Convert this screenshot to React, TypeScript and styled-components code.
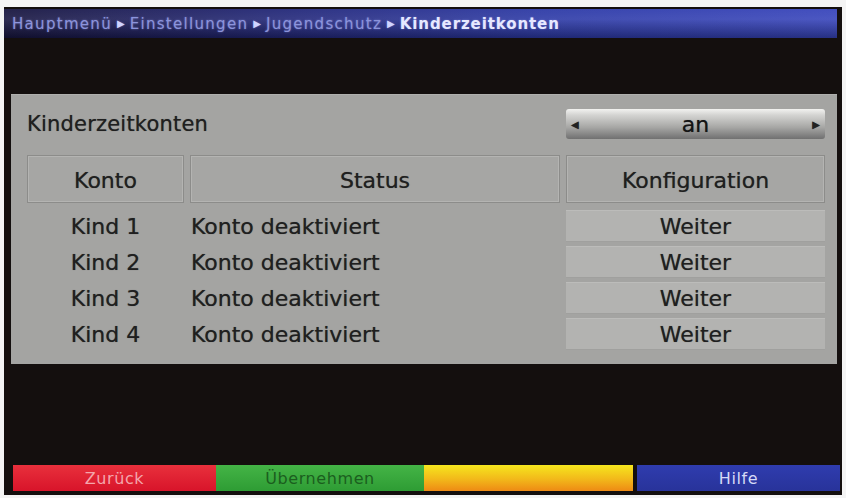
import React from "react";
import styled, { createGlobalStyle } from "styled-components";

const Global = createGlobalStyle`
  html, body { margin: 0; padding: 0; background: #f4f4f4; }
  body { font-family: "DejaVu Sans", "Liberation Sans", sans-serif; }
`;

const Page = styled.div`
  width: 846px;
  height: 498px;
  padding: 7px 4px 3px 4px;
  box-sizing: border-box;
`;

const Screen = styled.div`
  height: 488px;
  background: #140f0e;
  display: flex;
  flex-direction: column;
  padding: 2px 0 4px 0;
  box-sizing: border-box;
`;

const TitleBar = styled.div`
  height: 29px;
  margin-right: 5px;
  display: flex;
  align-items: center;
  padding-left: 8px;
  background:
    linear-gradient(to bottom, rgba(255,255,255,0.06), rgba(255,255,255,0.1) 35%, rgba(0,0,0,0.3)),
    linear-gradient(to right, #17153f 0%, #22277a 35%, #2c39a6 65%, #3744bb 100%);
  font-size: 15px;
  white-space: nowrap;
  text-shadow: 0 0 2px rgba(160,170,255,0.5);
`;

const Crumb = styled.span<{ $current?: boolean }>`
  color: ${(p) => (p.$current ? "#e6e8ff" : "#8c94dc")};
  font-weight: ${(p) => (p.$current ? "bold" : "normal")};
  letter-spacing: ${(p) => (p.$current ? "0.9px" : "1.3px")};
`;

const Sep = styled.span`
  color: #d0d4ff;
  font-size: 10px;
  margin: 0 5px;
`;

const Panel = styled.div`
  margin: 56px 5px 0 7px;
  height: 270px;
  box-sizing: border-box;
  background: #a4a4a2;
  border-top: 1px solid #b0b0ae;
  padding: 14px 12px 0 16px;
  display: flex;
  flex-direction: column;
  color: #1f1f1f;
  font-size: 22px;
  text-shadow: 0 0 0.7px rgba(0,0,0,0.55);
`;

const SettingRow = styled.div`
  display: flex;
  align-items: center;
  justify-content: space-between;
  height: 30px;
`;

const Label = styled.div`
  font-size: 21px;
  letter-spacing: 0.2px;
`;

const Selector = styled.div`
  width: 259px;
  height: 30px;
  box-sizing: border-box;
  border-radius: 3px;
  background: linear-gradient(to bottom, #f2f2f0 0%, #d4d4d2 20%, #a8a8a6 60%, #707070 100%);
  display: flex;
  align-items: center;
  justify-content: space-between;
  padding: 0 5px;
  font-size: 22px;
  color: #141414;
`;

const Arrow = styled.span`
  font-size: 10px;
  color: #222;
`;

const Grid = styled.div`
  display: grid;
  grid-template-columns: 157px 370px 259px;
  column-gap: 6px;
`;

const HeaderGrid = styled(Grid)`
  margin-top: 16px;
`;

const HeaderCell = styled.div`
  height: 48px;
  box-sizing: border-box;
  border: 1px solid #8c8c8a;
  box-shadow: inset 0 0 0 1px #b4b4b2;
  background: #a6a6a4;
  display: flex;
  align-items: center;
  justify-content: center;
  padding-top: 2px;
`;

const Rows = styled.div`
  margin-top: 7px;
  display: flex;
  flex-direction: column;
  gap: 4px;
`;

const RowGrid = styled(Grid)`
  height: 32px;
  align-items: center;
`;

const KontoCell = styled.div`
  text-align: center;
`;

const StatusCell = styled.div`
  padding-left: 1px;
`;

const Button = styled.div`
  height: 32px;
  background: #b3b3b1;
  box-shadow: inset 0 -1px 0 #a0a09e, inset 0 1px 0 #bcbcba;
  display: flex;
  align-items: center;
  justify-content: center;
`;

const Footer = styled.div`
  margin-top: auto;
  display: flex;
  height: 26px;
  padding: 0 2px 0 9px;
  font-size: 16px;
  letter-spacing: 0.6px;
`;

const Key = styled.div<{ $bg: string; $fg: string; $w: number; $ml?: number }>`
  width: ${(p) => p.$w}px;
  margin-left: ${(p) => p.$ml ?? 0}px;
  background: ${(p) => p.$bg};
  color: ${(p) => p.$fg};
  display: flex;
  align-items: center;
  justify-content: center;
`;

const rows = ["Kind 1", "Kind 2", "Kind 3", "Kind 4"];

export default function App() {
  return (
    <Page>
      <Global />
      <Screen>
        <TitleBar>
          <Crumb>Hauptmenü</Crumb>
          <Sep>▶</Sep>
          <Crumb>Einstellungen</Crumb>
          <Sep>▶</Sep>
          <Crumb>Jugendschutz</Crumb>
          <Sep>▶</Sep>
          <Crumb $current>Kinderzeitkonten</Crumb>
        </TitleBar>
        <Panel>
          <SettingRow>
            <Label>Kinderzeitkonten</Label>
            <Selector>
              <Arrow>◀</Arrow>
              <span>an</span>
              <Arrow>▶</Arrow>
            </Selector>
          </SettingRow>
          <HeaderGrid>
            <HeaderCell>Konto</HeaderCell>
            <HeaderCell>Status</HeaderCell>
            <HeaderCell>Konfiguration</HeaderCell>
          </HeaderGrid>
          <Rows>
            {rows.map((r) => (
              <RowGrid key={r}>
                <KontoCell>{r}</KontoCell>
                <StatusCell>Konto deaktiviert</StatusCell>
                <Button>Weiter</Button>
              </RowGrid>
            ))}
          </Rows>
        </Panel>
        <Footer>
          <Key $w={203} $bg="linear-gradient(to bottom, #e8303c, #d8142a)" $fg="#f4a6ac">Zurück</Key>
          <Key $w={208} $bg="linear-gradient(to bottom, #44b446, #2e9c34)" $fg="#1b5e1e">Übernehmen</Key>
          <Key $w={209} $bg="linear-gradient(to bottom, #f6e61e, #f2b81a 55%, #ee8a14)" $fg="#333"></Key>
          <Key $w={203} $ml={4} $bg="linear-gradient(to bottom, #2f3cae, #28339a)" $fg="#d6daf6">Hilfe</Key>
        </Footer>
      </Screen>
    </Page>
  );
}
